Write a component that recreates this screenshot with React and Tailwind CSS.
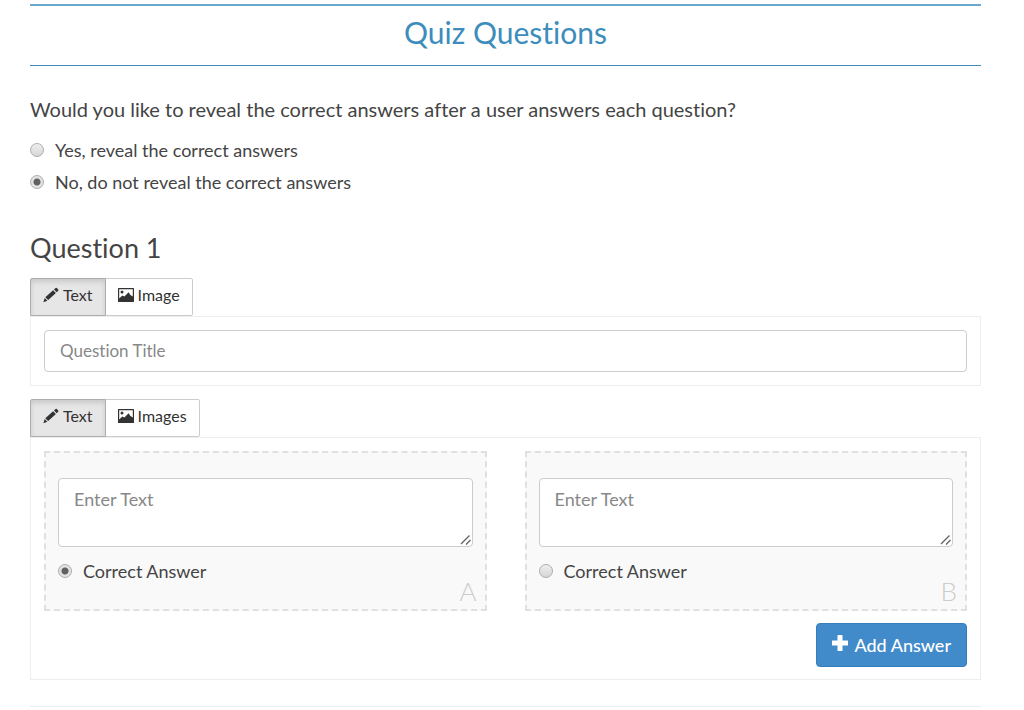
import { useState } from 'react';

const PencilIcon = () => (
  <svg viewBox="0 0 16 16" className="w-4 h-4 shrink-0" fill="currentColor" aria-hidden="true">
    <path d="M0.4 15.2 L1.7 11.1 L4.4 13.8 Z" />
    <path d="M2.3 10.2 L10.1 3.2 L12.9 6 L5.2 13.1 Z" />
    <path d="M11 2.4 L12.6 0.9 Q13.2 0.5 13.8 1 L15.2 2.5 Q15.7 3.1 15.2 3.7 L13.7 5.2 Z" />
  </svg>
);

const PictureIcon = () => (
  <svg viewBox="0 0 16 16" className="w-4 h-4 shrink-0" fill="currentColor" aria-hidden="true">
    <path
      fillRule="evenodd"
      d="M0.6 1 H15.4 Q16 1 16 1.6 V14.4 Q16 15 15.4 15 H0.6 Q0 15 0 14.4 V1.6 Q0 1 0.6 1 Z M1.2 2.2 V11.4 L4.3 8.4 L6.4 9.5 L10.6 5.2 L12.4 8 L14.8 9.4 V2.2 Z"
    />
    <circle cx="4" cy="4.9" r="1.5" />
  </svg>
);

const PlusIcon = () => (
  <svg viewBox="0 0 16 16" className="w-4 h-4 shrink-0 mb-1" fill="currentColor" aria-hidden="true">
    <path d="M6 0 H10 Q10.5 0 10.5 0.5 V5.5 H15.5 Q16 5.5 16 6 V10 Q16 10.5 15.5 10.5 H10.5 V15.5 Q10.5 16 10 16 H6 Q5.5 16 5.5 15.5 V10.5 H0.5 Q0 10.5 0 10 V6 Q0 5.5 0.5 5.5 H5.5 V0.5 Q5.5 0 6 0 Z" />
  </svg>
);

const ResizeGrip = () => (
  <svg
    viewBox="0 0 12 12"
    className="absolute right-px bottom-px w-3 h-3 pointer-events-none"
    stroke="#666"
    strokeWidth="1.4"
    aria-hidden="true"
  >
    <path d="M1 10 L9.5 1.5 M6 10.5 L10.5 6" />
  </svg>
);

function Radio({ name, label, checked, onChange }) {
  return (
    <label className="flex items-center gap-[11px] leading-6">
      <input
        type="radio"
        name={name}
        checked={checked}
        onChange={onChange}
        className="appearance-none w-3.5 h-3.5 shrink-0 rounded-full border border-[#adadad] bg-linear-to-b from-[#eeeeee] to-[#d6d6d6] checked:bg-[radial-gradient(circle,#606060_0_3px,#e2e2e2_4px)]"
      />
      {label}
    </label>
  );
}

function ModeSwitch({ imageLabel }) {
  const [mode, setMode] = useState('text');
  const base = 'flex items-center h-[38px] gap-1 px-3 pb-1 border text-[16px] text-[#333]';
  const active = 'bg-[#e6e6e6] border-[#adadad] shadow-[inset_0_3px_5px_rgba(0,0,0,0.125)] relative';
  const idle = 'bg-white border-[#ccc]';

  return (
    <div className="flex">
      <button
        type="button"
        onClick={() => setMode('text')}
        className={`${base} rounded-tl-xs ${mode === 'text' ? active : idle}`}
      >
        <PencilIcon />
        Text
      </button>
      <button
        type="button"
        onClick={() => setMode('image')}
        className={`${base} -ml-px rounded-r-xs ${mode === 'image' ? active : idle}`}
      >
        <PictureIcon />
        {imageLabel}
      </button>
    </div>
  );
}

function AnswerCard({ letter, checked, onSelect }) {
  return (
    <div className="relative border-2 border-dashed border-[#e0e0e0] bg-[#f9f9f9] px-3 pt-[25px] pb-[26px]">
      <div className="relative">
        <textarea
          aria-label={`Answer ${letter}`}
          placeholder="Enter Text"
          className="block w-full h-[69px] px-[15px] py-2 border border-[#ccc] rounded bg-white text-[18px] leading-6 placeholder:text-[#888] resize-y [&::-webkit-resizer]:bg-transparent"
        />
        <ResizeGrip />
      </div>
      <div className="mt-3 text-[18px]">
        <Radio name="correct" label="Correct Answer" checked={checked} onChange={onSelect} />
      </div>
      <span className="absolute right-2 bottom-0.5 text-[26px] leading-8 font-light text-[#ccc]">{letter}</span>
    </div>
  );
}

export default function App() {
  const [reveal, setReveal] = useState('no');
  const [correct, setCorrect] = useState('A');
  const [answers, setAnswers] = useState(['A', 'B']);

  const addAnswer = () => {
    setAnswers([...answers, String.fromCharCode(65 + answers.length)]);
  };

  return (
    <main className="bg-white pt-1 pl-[30px] pr-[43px] font-['Lato',sans-serif] [font-variant-ligatures:none] text-[#444]">
      <header className="border-t-2 border-b border-t-[#6aa7cd] border-b-[#3c8dbc] pt-2 pb-[15px]">
        <h1 className="text-center text-[30px] leading-9 text-[#3c8dbc]">Quiz Questions</h1>
      </header>

      <fieldset className="mt-[29px] text-[18px]">
        <legend className="text-[20px] leading-7">
          Would you like to reveal the correct answers after a user answers each question?
        </legend>
        <div className="mt-[15px] flex flex-col gap-2">
          <Radio
            name="reveal"
            label="Yes, reveal the correct answers"
            checked={reveal === 'yes'}
            onChange={() => setReveal('yes')}
          />
          <Radio
            name="reveal"
            label="No, do not reveal the correct answers"
            checked={reveal === 'no'}
            onChange={() => setReveal('no')}
          />
        </div>
      </fieldset>

      <section className="mt-9">
        <h2 className="mb-3 text-[27px] leading-9">Question 1</h2>

        <ModeSwitch imageLabel="Image" />
        <div className="border border-[#eee] p-[13px]">
          <input
            type="text"
            aria-label="Question Title"
            placeholder="Question Title"
            className="block w-full h-[42px] px-[15px] pb-0.5 border border-[#ccc] rounded bg-white text-[17px] placeholder:text-[#888]"
          />
        </div>

        <div className="mt-[13px]">
          <ModeSwitch imageLabel="Images" />
        </div>
        <div className="border border-[#eee] px-[13px] pt-[13px] pb-3">
          <div className="grid grid-cols-2 gap-x-[38px] gap-y-3">
            {answers.map((letter) => (
              <AnswerCard
                key={letter}
                letter={letter}
                checked={correct === letter}
                onSelect={() => setCorrect(letter)}
              />
            ))}
          </div>
          <div className="mt-3 flex justify-end">
            <button
              type="button"
              onClick={addAnswer}
              className="flex items-center h-11 gap-1.5 px-[15px] border border-[#357ebd] rounded bg-[#428bca] text-[18px] font-medium text-white"
            >
              <PlusIcon />
              Add Answer
            </button>
          </div>
        </div>
      </section>

      <hr className="mt-[26px] border-[#eee]" />
    </main>
  );
}
